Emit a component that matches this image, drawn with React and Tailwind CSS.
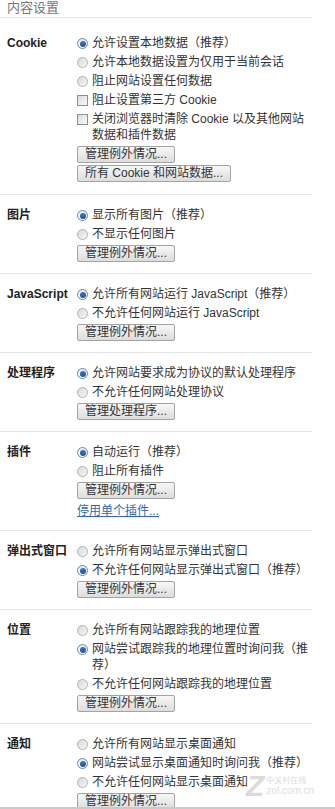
const sections = [
  {
    label: "Cookie",
    first: true,
    options: [
      { kind: "radio", on: true, text: "允许设置本地数据（推荐）" },
      { kind: "radio", text: "允许本地数据设置为仅用于当前会话" },
      { kind: "radio", text: "阻止网站设置任何数据" },
      { kind: "check", text: "阻止设置第三方 Cookie" },
      { kind: "check", text: "关闭浏览器时清除 Cookie 以及其他网站数据和插件数据" },
    ],
    buttons: ["管理例外情况...", "所有 Cookie 和网站数据..."],
  },
  {
    label: "图片",
    options: [
      { kind: "radio", on: true, text: "显示所有图片（推荐）" },
      { kind: "radio", text: "不显示任何图片" },
    ],
    buttons: ["管理例外情况..."],
  },
  {
    label: "JavaScript",
    options: [
      { kind: "radio", on: true, text: "允许所有网站运行 JavaScript（推荐）" },
      { kind: "radio", text: "不允许任何网站运行 JavaScript" },
    ],
    buttons: ["管理例外情况..."],
  },
  {
    label: "处理程序",
    options: [
      { kind: "radio", on: true, text: "允许网站要求成为协议的默认处理程序" },
      { kind: "radio", text: "不允许任何网站处理协议" },
    ],
    buttons: ["管理处理程序..."],
  },
  {
    label: "插件",
    options: [
      { kind: "radio", on: true, text: "自动运行（推荐）" },
      { kind: "radio", text: "阻止所有插件" },
    ],
    buttons: ["管理例外情况..."],
    link: "停用单个插件...",
  },
  {
    label: "弹出式窗口",
    options: [
      { kind: "radio", text: "允许所有网站显示弹出式窗口" },
      { kind: "radio", on: true, text: "不允许任何网站显示弹出式窗口（推荐）" },
    ],
    buttons: ["管理例外情况..."],
  },
  {
    label: "位置",
    options: [
      { kind: "radio", text: "允许所有网站跟踪我的地理位置" },
      { kind: "radio", on: true, text: "网站尝试跟踪我的地理位置时询问我（推荐）" },
      { kind: "radio", text: "不允许任何网站跟踪我的地理位置" },
    ],
    buttons: ["管理例外情况..."],
  },
  {
    label: "通知",
    options: [
      { kind: "radio", text: "允许所有网站显示桌面通知" },
      { kind: "radio", on: true, text: "网站尝试显示桌面通知时询问我（推荐）" },
      { kind: "radio", text: "不允许任何网站显示桌面通知" },
    ],
    buttons: ["管理例外情况..."],
  },
];

function Radio({ on }) {
  if (on) {
    return (
      <span className="mt-[3px] flex h-[11px] w-[11px] shrink-0 items-center justify-center rounded-full border border-[#6d86a6] bg-linear-to-b from-[#e3ebf5] to-[#ffffff]">
        <span className="h-[6px] w-[6px] rounded-full bg-linear-to-b from-[#3f78c4] to-[#1d4f96]" />
      </span>
    );
  }
  return (
    <span className="mt-[3px] h-[11px] w-[11px] shrink-0 rounded-full border border-[#b2b2b2] bg-linear-to-br from-[#d8d8d8] to-[#f8f8f8]" />
  );
}

function Check() {
  return (
    <span className="mt-[3px] h-[11px] w-[11px] shrink-0 border border-[#8e8f8f] bg-linear-to-br from-[#dcdcdc] to-[#fafafa]" />
  );
}

function Section({ s }) {
  return (
    <div className={`flex border-[#e5e5e5] ${s.first ? "pt-[17px] pb-[12px]" : "border-t pt-[12px] pb-[11px]"}`}>
      <div className="w-[77px] shrink-0 pl-[7px] text-[12px] font-bold leading-[16px] text-[#222]">
        {s.label}
      </div>
      <div className="flex-1">
        {s.options.map((o, i) => (
          <div key={i} className="mb-[3px] flex items-start gap-[4px] text-[12px] leading-[16px] text-[#333]">
            {o.kind === "radio" ? <Radio on={o.on} /> : <Check />}
            <span>{o.text}</span>
          </div>
        ))}
        <div className="flex flex-col items-start gap-[2px]">
          {s.buttons.map((b) => (
            <button
              key={b}
              type="button"
              className="block h-[17px] rounded-[2px] border border-[#a3a3a3] bg-linear-to-b from-[#f7f7f7] to-[#dddddd] px-[7px] text-[12px] leading-[15px] text-[#333]"
            >
              {b}
            </button>
          ))}
        </div>
        {s.link ? (
          <div className="mt-[4px] text-[12px] leading-[16px] text-[#2f68b6] underline">{s.link}</div>
        ) : null}
      </div>
    </div>
  );
}

export default function App() {
  return (
    <div
      className="relative h-[809px] w-[335px] overflow-hidden bg-white"
      style={{ fontFamily: '"Liberation Sans", "Noto Sans CJK SC", sans-serif' }}
    >
      <div className="w-[312px]">
        {/* 标题 */}
        <div className="h-[18px] border-b border-[#e5e5e5] pl-[7px] text-[13px] leading-[16px] text-[#777]">
          内容设置
        </div>

        {sections.map((s) => (
          <Section key={s.label} s={s} />
        ))}
      </div>

      {/* 水印 */}
      <div className="pointer-events-none absolute bottom-[8px] left-[246px] flex items-center gap-[2px] text-[#dcdcdc]">
        <span className="text-[30px] font-bold italic leading-[30px]">Z</span>
        <div className="flex flex-col text-[8px] leading-[10px]">
          <span>中关村在线</span>
          <span className="text-[10px]">zol.com.cn</span>
        </div>
      </div>

      {/* 底部边线 */}
      <div className="absolute bottom-0 left-0 h-[2px] w-full bg-[#c9c9c9]" />
    </div>
  );
}
